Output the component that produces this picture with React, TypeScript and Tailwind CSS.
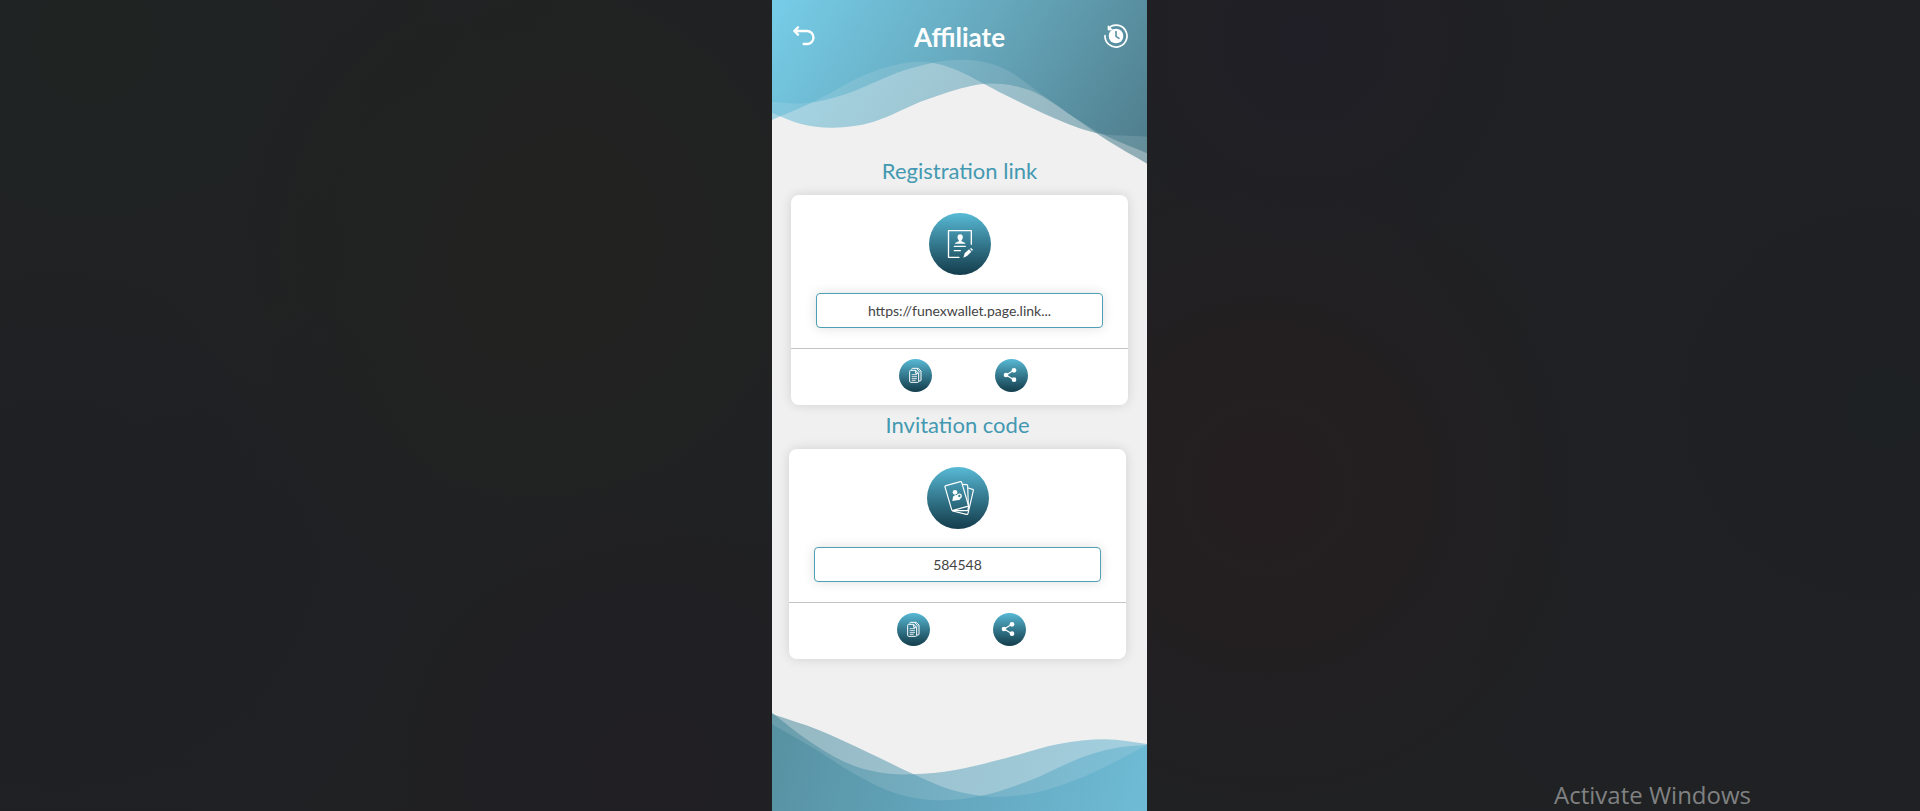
import React, { useId } from "react";

type Point = [number, number];

/** Builds a closed shape whose wavy edge runs smoothly through the points. */
function wavePath(points: Point[], closeY: number): string {
  const at = (i: number) => points[Math.max(0, Math.min(points.length - 1, i))];
  let d = `M${points[0][0]} ${points[0][1]}`;
  for (let i = 0; i < points.length - 1; i++) {
    const [p0, p1, p2, p3] = [at(i - 1), at(i), at(i + 1), at(i + 2)];
    const s = (p2[0] - p1[0]) / 3;
    const m1 = (p2[1] - p0[1]) / (p2[0] - p0[0]);
    const m2 = (p3[1] - p1[1]) / (p3[0] - p1[0]);
    d += ` C${p1[0] + s} ${p1[1] + m1 * s} ${p2[0] - s} ${p2[1] - m2 * s} ${p2[0]} ${p2[1]}`;
  }
  return `${d} V${closeY} H0 Z`;
}

const topWaves: Point[][] = [
  [[0, 360], [130, 303], [290, 220], [434, 185], [540, 205], [680, 275], [840, 352], [969, 398], [1125, 410]],
  [[0, 305], [100, 310], [220, 283], [400, 210], [560, 179], [690, 203], [820, 291], [969, 391], [1125, 460]],
  [[0, 338], [84, 371], [184, 383], [300, 367], [460, 300], [600, 257], [690, 252], [790, 278], [900, 348], [1010, 424], [1125, 491]],
];

const bottomWaves: Point[][] = [
  [[0, 132], [140, 180], [290, 248], [430, 315], [540, 360], [660, 380], [790, 368], [940, 318], [1125, 225]],
  [[0, 128], [110, 212], [220, 277], [320, 307], [420, 313], [550, 300], [700, 265], [860, 222], [1000, 208], [1125, 222]],
  [[0, 163], [130, 238], [250, 313], [370, 370], [490, 391], [620, 379], [770, 333], [930, 262], [1030, 234], [1125, 224]],
];

function TopWaves() {
  return (
    <svg className="absolute inset-x-0 top-0 h-[164px] w-full" viewBox="0 0 1125 492" preserveAspectRatio="none" aria-hidden="true">
      <defs>
        <linearGradient id="top-fill" gradientUnits="userSpaceOnUse" x1="0" y1="0" x2="1010" y2="640">
          <stop offset="0" stopColor="#68c9e7" />
          <stop offset="0.5" stopColor="#569fb6" />
          <stop offset="1" stopColor="#3c7080" />
        </linearGradient>
      </defs>
      {topWaves.map((w, i) => (
        <path key={i} d={wavePath(w, 0)} fill="url(#top-fill)" opacity="0.53" />
      ))}
    </svg>
  );
}

function BottomWaves() {
  return (
    <svg className="mt-auto block h-[141px] w-full" viewBox="0 0 1125 423" preserveAspectRatio="none" aria-hidden="true">
      <defs>
        <linearGradient id="bottom-fill" gradientUnits="userSpaceOnUse" x1="0" y1="150" x2="1125" y2="423">
          <stop offset="0" stopColor="#458698" />
          <stop offset="0.5" stopColor="#539eb8" />
          <stop offset="1" stopColor="#60b5d2" />
        </linearGradient>
      </defs>
      {bottomWaves.map((w, i) => (
        <path key={i} d={wavePath(w, 423)} fill="url(#bottom-fill)" opacity="0.53" />
      ))}
    </svg>
  );
}

function BackIcon() {
  return (
    <svg className="h-6 w-6" viewBox="0 0 72 72" fill="none" stroke="white" strokeWidth="7" strokeLinecap="round" strokeLinejoin="round" aria-hidden="true">
      <path d="M21 10 10 21 21 32M10 21H48a19.500 19.500 0 0 1 0 39H38" />
    </svg>
  );
}

function HistoryIcon() {
  return (
    <svg className="h-6 w-6" viewBox="0 0 72 72" fill="none" aria-hidden="true">
      <circle cx="36" cy="36" r="22" fill="white" />
      <path d="M36 23V37l9 6" stroke="#5b93a4" strokeWidth="5" strokeLinecap="round" strokeLinejoin="round" />
      <path d="M16 10A33 33 0 1 1 3 35" stroke="white" strokeWidth="5" strokeLinecap="round" />
      <path d="M12 5v13h14z" fill="white" stroke="white" strokeWidth="2" strokeLinejoin="round" />
    </svg>
  );
}

function FormIcon() {
  return (
    <svg className="h-full w-full" viewBox="0 0 186 186" fill="none" stroke="white" aria-hidden="true">
      <path d="M127 94V53H58.500V133H90" strokeWidth="4" strokeLinejoin="round" strokeLinecap="round" />
      <path d="M93.500 64c-5 0-8 4-8 9 0 4 2 7 4 9v3l-10 4-2 3h32l-2-3-10-4v-3c2-2 4-5 4-9 0-5-3-9-8-9z" fill="white" stroke="none" />
      <path d="M76 100H109M76 113H94" strokeWidth="4" strokeLinecap="round" />
      <path d="M103 134l4-13 13-12 7 7-13 13zM123 107l3-2 6 5-3 4z" fill="white" stroke="none" />
    </svg>
  );
}

function CardsIcon() {
  return (
    <svg className="h-full w-full" viewBox="0 0 186 186" fill="none" stroke="white" strokeWidth="3.500" strokeLinejoin="round" strokeLinecap="round" aria-hidden="true">
      <path d="M54 60Q53 57 57 56L100 44Q103 43 104 46L124 114Q125 117 122 118L78 130Q75 131 74 128Z" />
      <path d="M106 52L119 53Q122 53 122 56L124 114M78 131H120Q123 131 123 128L125 118" />
      <path d="M124 63L137 67Q140 68 139 71L123 139Q122 143 118 142L77 132" />
      <circle cx="84" cy="76" r="7" fill="white" stroke="none" />
      <path d="M76 102l2-13q5-6 11-5l5 9 7 1-2 4z" fill="white" stroke="none" />
      <circle cx="97" cy="87" r="5.500" strokeWidth="4" />
    </svg>
  );
}

function CopyIcon() {
  return (
    <svg className="h-full w-full" viewBox="0 0 99 99" fill="none" stroke="white" strokeWidth="3" strokeLinejoin="round" aria-hidden="true">
      <path d="M38 32V31q0-3 3-3H58l8 8V63q0 3-3 3H60" />
      <path d="M32 37q0-3 3-3H50l9 9V67q0 3-3 3H35q-3 0-3-3zM50 34V43H59M54 29l7 9V40" />
      <path d="M38 47H54M38 53H54M38 59H54M38 64H50" strokeWidth="2.500" />
    </svg>
  );
}

function ShareIcon() {
  return (
    <svg className="h-full w-full" viewBox="0 0 99 99" fill="white" stroke="white" aria-hidden="true">
      <path d="M57 34 33 48 57 62" fill="none" strokeWidth="3.500" />
      <g stroke="none">
        <circle cx="33" cy="48" r="7" />
        <circle cx="57" cy="34" r="7" />
        <circle cx="57" cy="62" r="7" />
      </g>
    </svg>
  );
}

function RoundButton({ label, children }: { label: string; children: React.ReactNode }) {
  return (
    <button type="button" aria-label={label} className="h-[33px] w-[33px] rounded-full bg-linear-to-b from-[#58bad6] to-[#143d4c]">
      {children}
    </button>
  );
}

interface ShareCardProps {
  title: string;
  value: string;
  icon: React.ReactNode;
  className: string;
}

function ShareCard({ title, value, icon, className }: ShareCardProps) {
  const id = useId();
  return (
    <section className={className}>
      <h2 className="mb-2 text-center text-[22px] leading-8 text-[#4399b1]">
        <label htmlFor={id}>{title}</label>
      </h2>
      <div className="rounded-lg bg-white shadow-[0_0_12px_rgba(0,0,0,0.13)]">
        <div className="flex flex-col items-center gap-[18px] px-[25px] pt-[18px] pb-5">
          <div className="h-[62px] w-[62px] rounded-full bg-linear-to-b from-[#58bad6] to-[#143d4c]">{icon}</div>
          <input
            id={id}
            readOnly
            value={value}
            className="h-[35px] w-full rounded border border-[#4f9fb5] bg-white text-center text-sm text-[#444444] shadow-[0_0_12px_rgba(0,0,0,0.13)] outline-none"
          />
        </div>
        <div className="flex justify-center gap-[63px] border-t border-[#c4c4c4] pt-[10px] pb-[13px] pl-2">
          <RoundButton label={`Copy ${title.toLowerCase()}`}>
            <CopyIcon />
          </RoundButton>
          <RoundButton label={`Share ${title.toLowerCase()}`}>
            <ShareIcon />
          </RoundButton>
        </div>
      </div>
    </section>
  );
}

export default function App() {
  return (
    <div className="relative flex min-h-screen justify-center overflow-hidden bg-[#202123] bg-[radial-gradient(circle_at_5%_5%,#1f2322,transparent_25%),radial-gradient(circle_at_28%_30%,#222220,transparent_25%),radial-gradient(circle_at_34%_95%,#211f24,transparent_20%),radial-gradient(circle_at_3%_65%,#1e2024,transparent_20%),radial-gradient(circle_at_68%_5%,#201f27,transparent_16%),radial-gradient(circle_at_66%_60%,#251e20,transparent_25%),radial-gradient(circle_at_98%_50%,#1e2124,transparent_30%)] pr-px font-['Lato','Carlito',sans-serif]">
      <main className="relative flex min-h-screen w-full max-w-[375px] flex-col bg-[#f0f0f0]">
        <TopWaves />
        <header className="relative flex h-[74px] items-center justify-between px-[19px]">
          <button type="button" aria-label="Back" className="pb-[2px]">
            <BackIcon />
          </button>
          <h1 className="text-[26px] leading-8 font-bold text-white">Affiliate</h1>
          <button type="button" aria-label="History" className="pb-[2px]">
            <HistoryIcon />
          </button>
        </header>
        <div className="relative flex flex-col gap-1 pt-[81px]">
          <ShareCard
            title="Registration link"
            value="https://funexwallet.page.link..."
            icon={<FormIcon />}
            className="px-[19px]"
          />
          <ShareCard title="Invitation code" value="584548" icon={<CardsIcon />} className="pr-[21px] pl-[17px]" />
        </div>
        <BottomWaves />
      </main>
      <p className="absolute right-[169px] bottom-0 font-['Open_Sans',sans-serif] text-2xl leading-8 text-[#808182]">
        Activate Windows
      </p>
    </div>
  );
}
